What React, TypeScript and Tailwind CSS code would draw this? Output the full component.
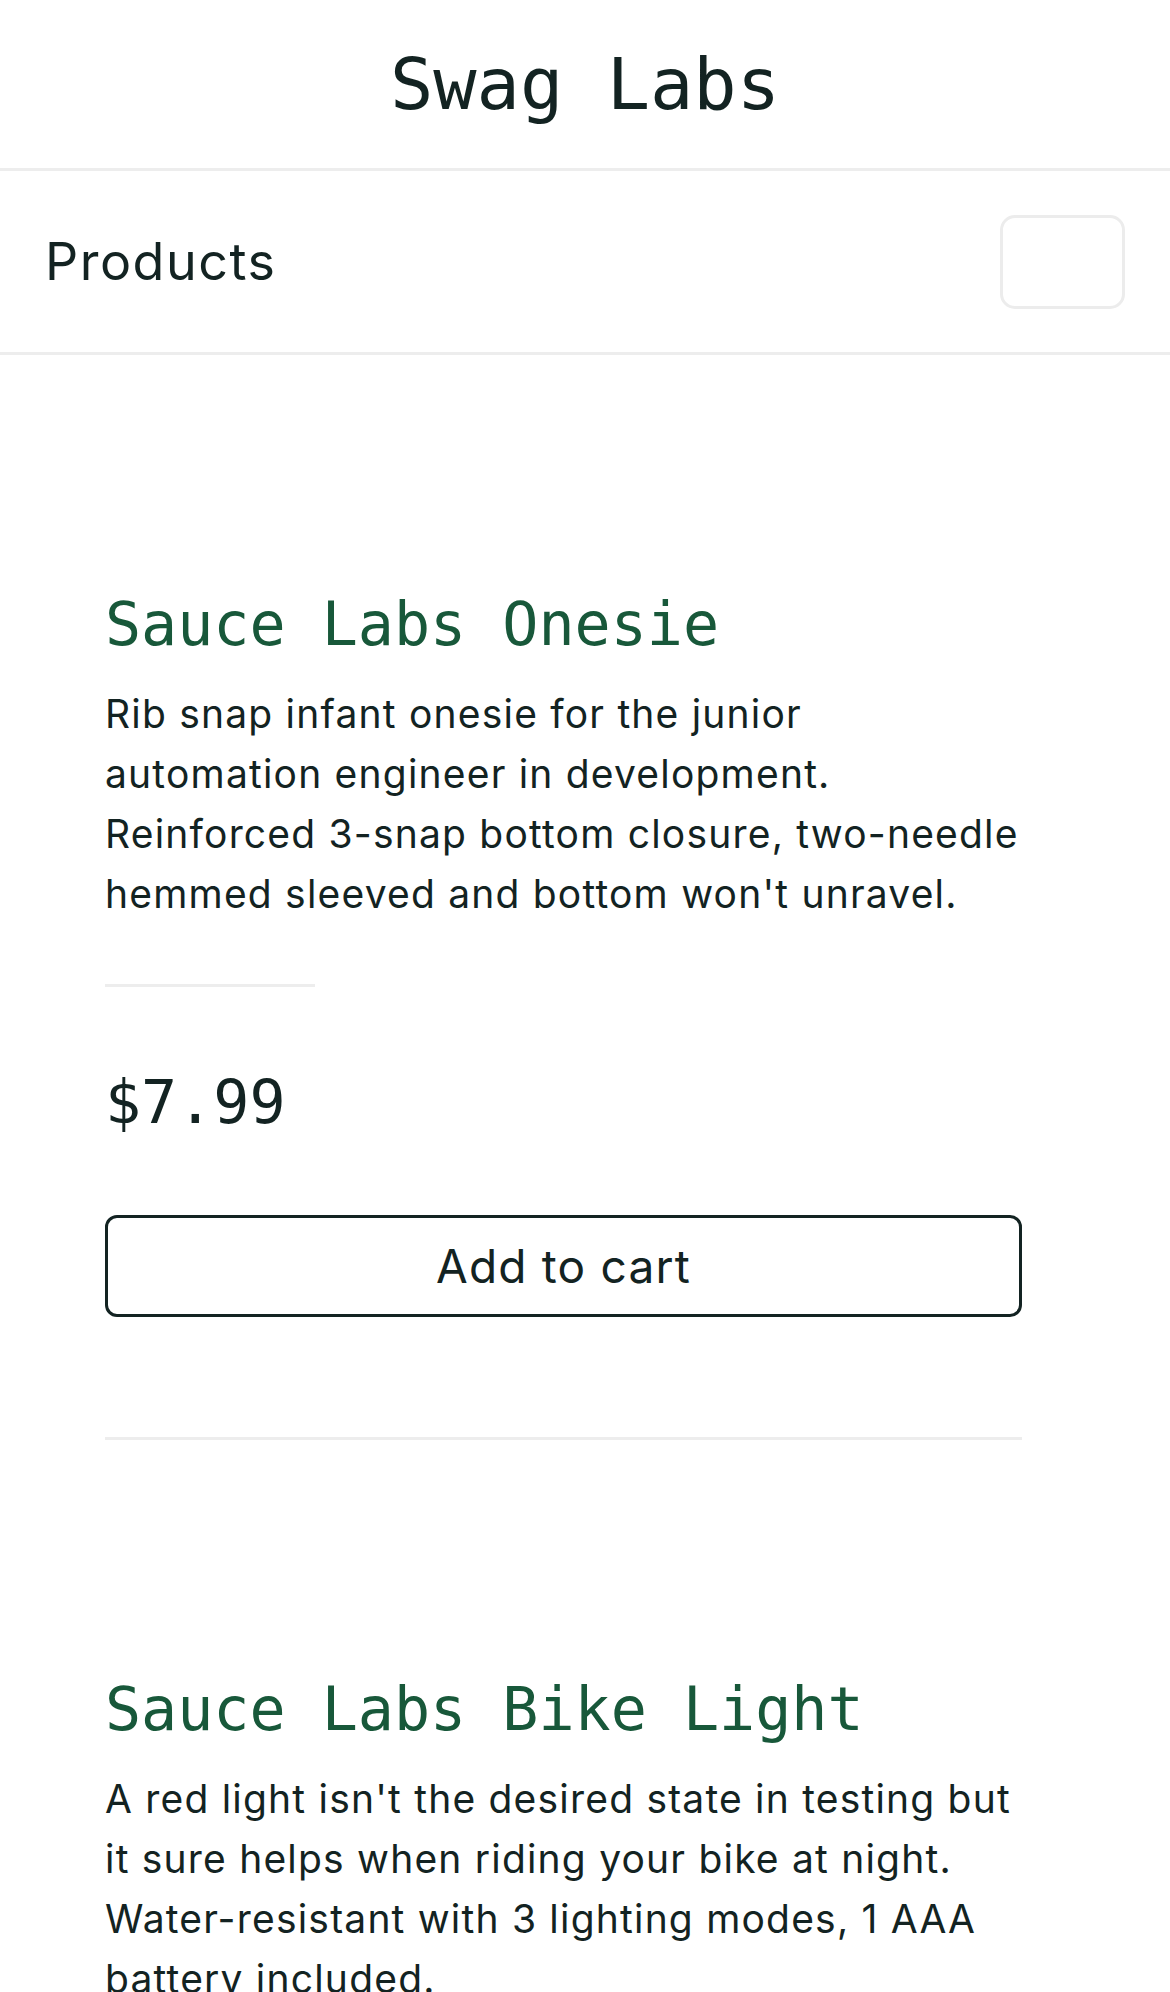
const mono = "font-['DejaVu_Sans_Mono','Liberation_Mono',monospace]";
const sans = "font-['Inter','Noto_Sans',sans-serif]";

type Product = {
  name: string;
  lines: string[];
  price: string;
};

const products: Product[] = [
  {
    name: "Sauce Labs Onesie",
    lines: [
      "Rib snap infant onesie for the junior",
      "automation engineer in development.",
      "Reinforced 3-snap bottom closure, two-needle",
      "hemmed sleeved and bottom won't unravel.",
    ],
    price: "$7.99",
  },
  {
    name: "Sauce Labs Bike Light",
    lines: [
      "A red light isn't the desired state in testing but",
      "it sure helps when riding your bike at night.",
      "Water-resistant with 3 lighting modes, 1 AAA",
      "battery included.",
    ],
    price: "$9.99",
  },
];

const ProductItem = ({ product }: { product: Product }) => {
  return (
    <div className="pl-[105px] pt-[233px]">
      <div className="w-[917px]">
        <h2 className={`${mono} text-[60px] leading-[72px] text-[#18583a] whitespace-nowrap`}>
          {product.name}
        </h2>
        <p
          className={`${sans} mt-[24px] text-[39px] leading-[60px] tracking-[1.2px] text-[#132322] whitespace-nowrap`}
        >
          {product.lines.map((line, i) => (
            <span key={i} className="block">
              {line}
            </span>
          ))}
        </p>
        <div className="mt-[60px] h-[3px] w-[210px] bg-[#ededed]" />
        <div className={`${mono} mt-[79px] text-[60px] leading-[72px] text-[#132322]`}>
          {product.price}
        </div>
        <button
          className={`${sans} mt-[77px] flex h-[102px] w-full items-center justify-center rounded-[12px] border-[3px] border-[#132322] bg-white text-[46px] tracking-[1.2px] text-[#132322]`}
        >
          Add to cart
        </button>
        <div className="mt-[120px] h-[3px] w-full bg-[#ededed]" />
      </div>
    </div>
  );
};

const App = () => {
  return (
    <div className="min-h-[1992px] w-[1170px] overflow-hidden bg-white">
      <header className="flex h-[171px] items-center justify-center border-b-[3px] border-[#ededed]">
        <h1 className={`${mono} text-[72px] leading-none text-[#132322]`}>Swag Labs</h1>
      </header>
      <div className="flex h-[184px] items-center justify-between border-b-[3px] border-[#ededed] px-[45px]">
        <span className={`${sans} text-[52px] leading-none tracking-[1.5px] text-[#132322]`}>
          Products
        </span>
        <div className="h-[94px] w-[125px] rounded-[15px] border-[3px] border-[#ececec] bg-white" />
      </div>
      {products.map((p) => (
        <ProductItem key={p.name} product={p} />
      ))}
    </div>
  );
};

export default App;
